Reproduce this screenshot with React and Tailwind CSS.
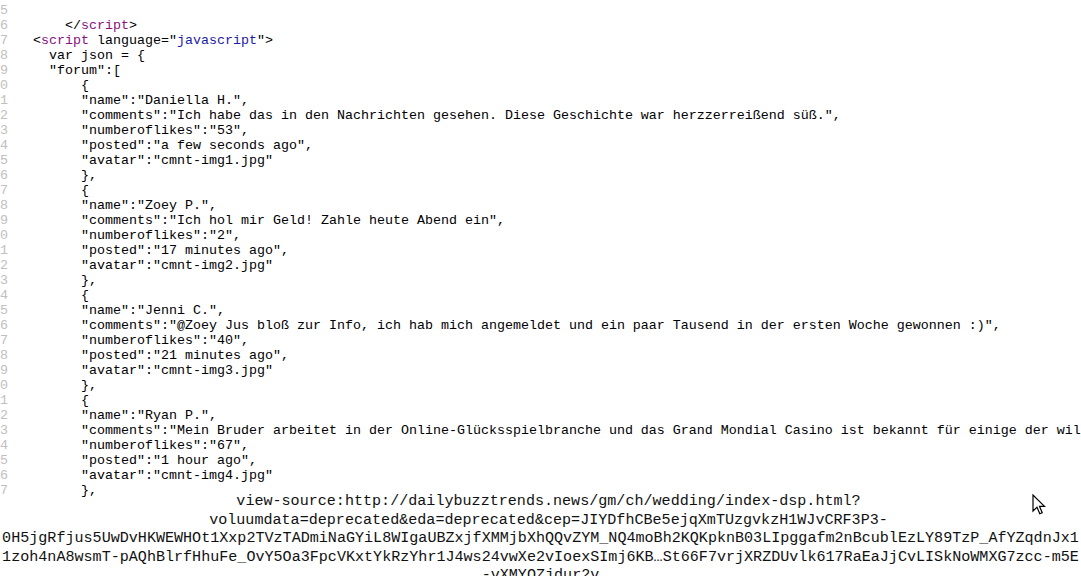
import React from 'react';

const TAG = 'text-[#881280]';
const VAL = 'text-[#1a1aa6]';

// each line: [lineNumber, indent (chars), parts]
const plain = (n, indent, text) => [n, indent, [{ t: text }]];

const entries = [
  {
    name: 'Daniella H.',
    comments: 'Ich habe das in den Nachrichten gesehen. Diese Geschichte war herzzerreißend süß.',
    likes: '53',
    posted: 'a few seconds ago',
    avatar: 'cmnt-img1.jpg',
  },
  {
    name: 'Zoey P.',
    comments: 'Ich hol mir Geld! Zahle heute Abend ein',
    likes: '2',
    posted: '17 minutes ago',
    avatar: 'cmnt-img2.jpg',
  },
  {
    name: 'Jenni C.',
    comments: '@Zoey Jus bloß zur Info, ich hab mich angemeldet und ein paar Tausend in der ersten Woche gewonnen :)',
    likes: '40',
    posted: '21 minutes ago',
    avatar: 'cmnt-img3.jpg',
  },
  {
    name: 'Ryan P.',
    comments: 'Mein Bruder arbeitet in der Online-Glücksspielbranche und das Grand Mondial Casino ist bekannt für einige der wildesten Gewinne.',
    likes: '67',
    posted: '1 hour ago',
    avatar: 'cmnt-img4.jpg',
  },
];

const buildLines = () => {
  const lines = [];
  let n = 25;
  lines.push(plain(n++, 0, ''));
  lines.push([n++, 4, [{ t: '</' }, { t: 'script', c: TAG }, { t: '>' }]]);
  lines.push([
    n++,
    0,
    [{ t: '<' }, { t: 'script', c: TAG }, { t: ' language="' }, { t: 'javascript', c: VAL }, { t: '">' }],
  ]);
  lines.push(plain(n++, 2, 'var json = {'));
  lines.push(plain(n++, 2, '"forum":['));
  entries.forEach((e) => {
    lines.push(plain(n++, 6, '{'));
    lines.push(plain(n++, 6, `"name":"${e.name}",`));
    lines.push(plain(n++, 6, `"comments":"${e.comments}",`));
    lines.push(plain(n++, 6, `"numberoflikes":"${e.likes}",`));
    lines.push(plain(n++, 6, `"posted":"${e.posted}",`));
    lines.push(plain(n++, 6, `"avatar":"${e.avatar}"`));
    lines.push(plain(n++, 6, '},'));
  });
  return lines;
};

const captionLines = [
  'view-source:http://dailybuzztrends.news/gm/ch/wedding/index-dsp.html?',
  'voluumdata=deprecated&eda=deprecated&cep=JIYDfhCBe5ejqXmTUzgvkzH1WJvCRF3P3-',
  '0H5jgRfjus5UwDvHKWEWHOt1Xxp2TVzTADmiNaGYiL8WIgaUBZxjfXMMjbXhQQvZYM_NQ4moBh2KQKpknB03LIpggafm2nBcublEzLY89TzP_AfYZqdnJx1',
  '1zoh4nA8wsmT-pAQhBlrfHhuFe_OvY5Oa3FpcVKxtYkRzYhr1J4ws24vwXe2vIoexSImj6KB…St66F7vrjXRZDUvlk617RaEaJjCvLISkNoWMXG7zcc-m5E',
  '-vXMYOZjdur2v',
];

const CodeLine = ({ num, indent, parts }) => (
  <div className="flex h-[15px] leading-[15px] whitespace-pre">
    <span className="w-[40px] -ml-[32px] shrink-0 text-right text-[#c0c0c0]">{num}</span>
    <span className="ml-[25px] text-black">
      {' '.repeat(indent)}
      {parts.map((p, i) => (
        <span key={i} className={p.c}>
          {p.t}
        </span>
      ))}
    </span>
  </div>
);

const Cursor = () => (
  <svg
    className="absolute left-[1032px] top-[494px]"
    width="14"
    height="22"
    viewBox="0 0 14 22"
  >
    <path
      d="M1 1 L1 17 L5 13.2 L7.8 19.8 L10.2 18.8 L7.5 12.3 L12.5 12.3 Z"
      fill="#fff"
      stroke="#000"
      strokeWidth="1.2"
      strokeLinejoin="miter"
    />
  </svg>
);

export default function App() {
  const lines = buildLines();

  return (
    <div className="relative h-[576px] w-full overflow-hidden bg-white">
      {/* Source listing */}
      <div className="pt-[3px] font-['Liberation_Mono',monospace] text-[13.33px]">
        {lines.map(([num, indent, parts]) => (
          <CodeLine key={num} num={num} indent={indent} parts={parts} />
        ))}
      </div>

      {/* Link status overlay */}
      <div className="absolute left-0 right-0 top-[492px] font-['Liberation_Mono',monospace] text-[15.08px] leading-[18.5px] text-[#111]">
        {captionLines.map((l, i) => (
          <div key={i} className={`whitespace-pre text-center ${i < 2 ? 'pl-[16px]' : ''}`}>
            {l}
          </div>
        ))}
      </div>

      <Cursor />
    </div>
  );
}
